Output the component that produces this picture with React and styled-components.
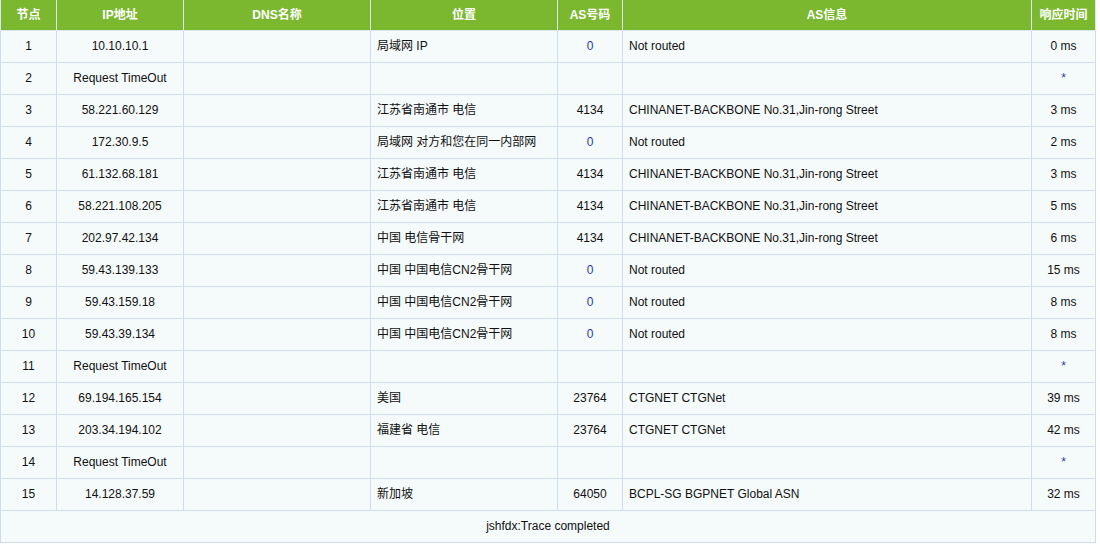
import React from "react";
import styled, { createGlobalStyle } from "styled-components";

const G = createGlobalStyle`
  body { margin: 0; background: #fff; font-family: "Liberation Sans", "Noto Sans CJK SC", sans-serif; }
`;

const Table = styled.table`
  width: 1095px;
  border-collapse: collapse;
  table-layout: fixed;
  font-size: 12px;
  color: #111;
  border-right: 1px solid #cfdcef;
`;
const Col = styled.col`
  width: ${p => p.$w}px;
`;
const Th = styled.th`
  background: #7cb82f;
  color: #fff;
  line-height: 30px;
  font-weight: bold;
  border: 1px solid #d8e6f0;
  border-top: none;
  padding: 0;
`;
const Td = styled.td`
  background: #f5fafa;
  border: 1px solid #cfdcef;
  padding: ${p => (p.$top ? "8px 6px 0" : "0 6px")};
  line-height: ${p => (p.$top ? "14px" : "31px")};
  text-align: ${p => (p.$left ? "left" : "center")};
  vertical-align: ${p => (p.$top ? "top" : "middle")};
  color: ${p => (p.$blue ? "#2a3aa0" : "#111")};
  white-space: nowrap;
  overflow: hidden;
`;

const widths = [56, 127, 187, 187, 65, 409, 64];
const heads = ["节点","IP地址","DNS名称","位置","AS号码","AS信息","响应时间"];

const rows = [
  ["1","10.10.10.1","局域网 IP","0","Not routed","0 ms"],
  ["2","Request TimeOut","","","","*"],
  ["3","58.221.60.129","江苏省南通市 电信","4134","CHINANET-BACKBONE No.31,Jin-rong Street","3 ms"],
  ["4","172.30.9.5","局域网 对方和您在同一内部网","0","Not routed","2 ms"],
  ["5","61.132.68.181","江苏省南通市 电信","4134","CHINANET-BACKBONE No.31,Jin-rong Street","3 ms"],
  ["6","58.221.108.205","江苏省南通市 电信","4134","CHINANET-BACKBONE No.31,Jin-rong Street","5 ms"],
  ["7","202.97.42.134","中国 电信骨干网","4134","CHINANET-BACKBONE No.31,Jin-rong Street","6 ms"],
  ["8","59.43.139.133","中国 中国电信CN2骨干网","0","Not routed","15 ms"],
  ["9","59.43.159.18","中国 中国电信CN2骨干网","0","Not routed","8 ms"],
  ["10","59.43.39.134","中国 中国电信CN2骨干网","0","Not routed","8 ms"],
  ["11","Request TimeOut","","","","*"],
  ["12","69.194.165.154","美国","23764","CTGNET CTGNet","39 ms"],
  ["13","203.34.194.102","福建省 电信","23764","CTGNET CTGNet","42 ms"],
  ["14","Request TimeOut","","","","*"],
  ["15","14.128.37.59","新加坡","64050","BCPL-SG BGPNET Global ASN","32 ms"],
];

export default function App() {
  return (
    <>
      <G />
      <Table>
        <colgroup>
          {widths.map((w, i) => <Col key={i} $w={w} />)}
        </colgroup>
        <thead>
          <tr>{heads.map(h => <Th key={h}>{h}</Th>)}</tr>
        </thead>
        <tbody>
          {rows.map(r => (
            <tr key={r[0]}>
              <Td>{r[0]}</Td>
              <Td>{r[1]}</Td>
              <Td></Td>
              <Td $left $top>{r[2]}</Td>
              <Td $blue={r[3] === "0"}>{r[3]}</Td>
              <Td $left $top>{r[4]}</Td>
              <Td $blue={r[5] === "*"}>{r[5]}</Td>
            </tr>
          ))}
          <tr><Td colSpan={7}>jshfdx:Trace completed</Td></tr>
        </tbody>
      </Table>
    </>
  );
}
